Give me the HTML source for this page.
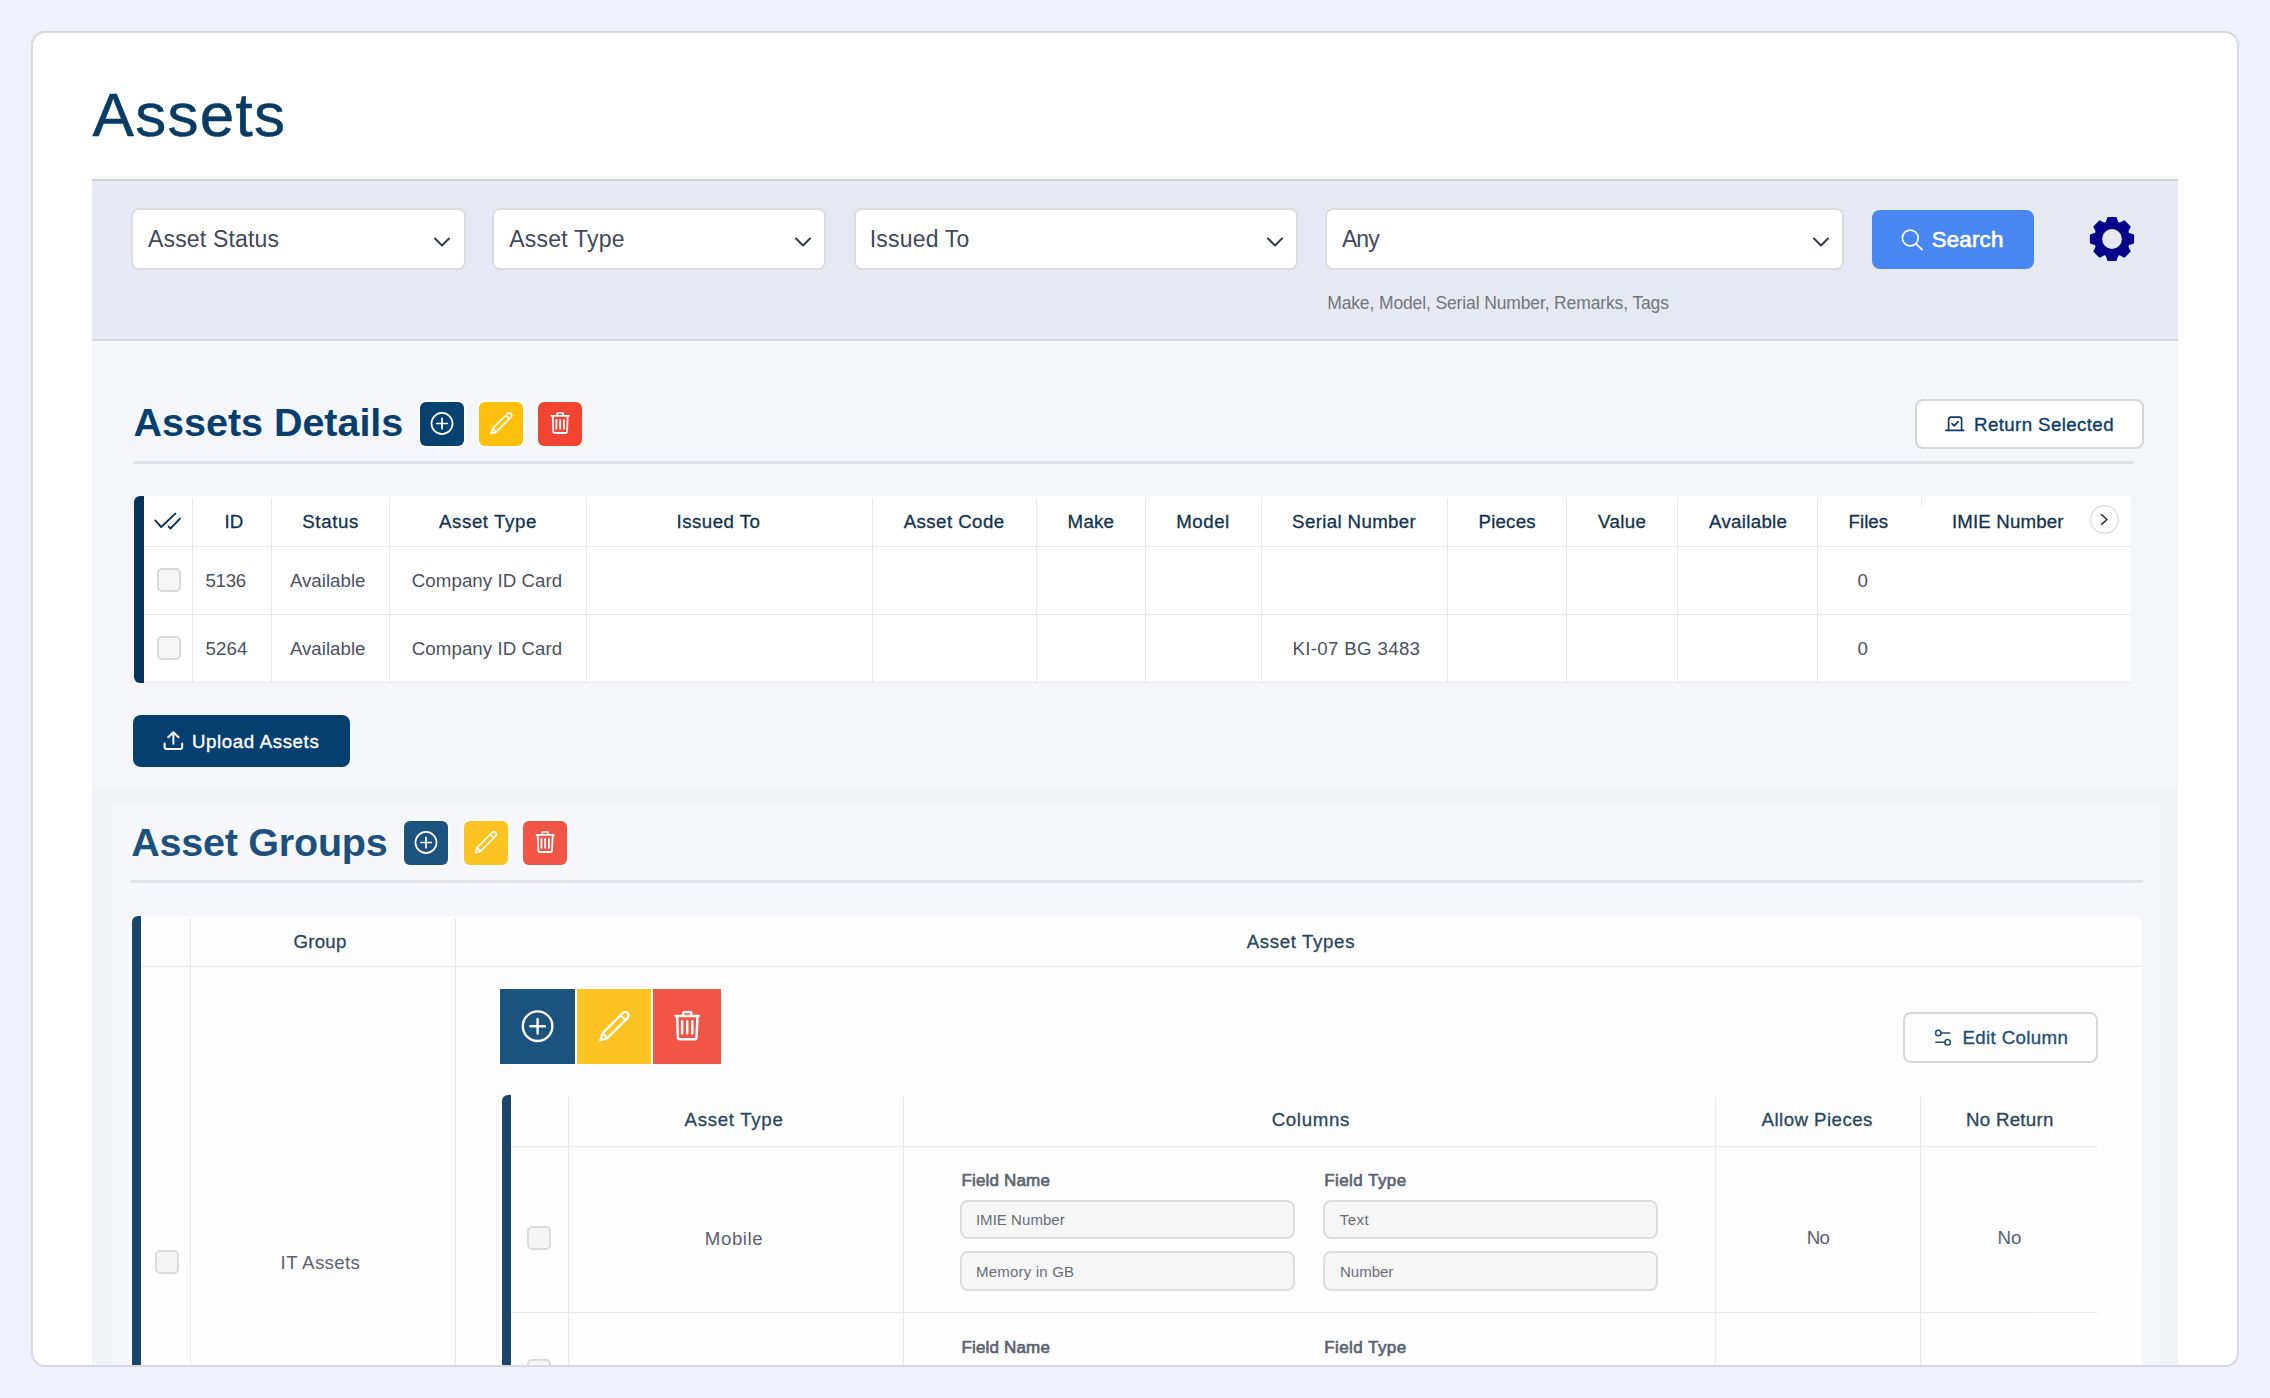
<!DOCTYPE html><html><head><meta charset="utf-8"><style>
html,body{margin:0;padding:0}
body{width:2270px;height:1398px;overflow:hidden;background:#eff1fb;position:relative;font-family:"Liberation Sans",sans-serif}
.b{position:absolute;box-sizing:border-box}
.t{position:absolute;white-space:nowrap}
svg{position:absolute;overflow:visible}
</style></head><body>
<div class="b" style="left:31px;top:31px;width:2208px;height:1336px;background:#fff;border:2px solid #d7d8e4;border-radius:14px"></div>
<div class="b" style="left:0;top:0;width:2270px;height:1398px;clip-path:inset(33px 33px 33px 33px round 12px)">
<div class="t" style="left:92.60px;top:83.75px;font-size:62px;line-height:62px;font-weight:400;color:#073b64;letter-spacing:1.280px;-webkit-text-stroke:0.5px #073b64">Assets</div>
<div class="b" style="left:92px;top:176px;width:2086px;height:3px;background:#f7f8fa"></div>
<div class="b" style="left:92px;top:179px;width:2086px;height:162px;background:#e6e9f1;border-top:2px solid #d2d3d7;border-bottom:2px solid #d7d8dc"></div>
<div class="b" style="left:131px;top:208px;width:335px;height:62px;background:#fff;border:2px solid #dcdcdc;border-radius:8px"></div>
<div class="t" style="left:148.00px;top:227.54px;font-size:23px;line-height:23px;font-weight:400;color:#414958;letter-spacing:0.178px;">Asset Status</div>
<svg style="left:434px;top:234px" width="16" height="16" viewBox="0 0 16 16"><path d="M1 4.5 L8 11.5 L15 4.5" fill="none" stroke="#333b47" stroke-width="2" stroke-linecap="round" stroke-linejoin="round"/></svg>
<div class="b" style="left:492px;top:208px;width:334px;height:62px;background:#fff;border:2px solid #dcdcdc;border-radius:8px"></div>
<div class="t" style="left:509.30px;top:227.54px;font-size:23px;line-height:23px;font-weight:400;color:#414958;letter-spacing:0.201px;">Asset Type</div>
<svg style="left:795px;top:234px" width="16" height="16" viewBox="0 0 16 16"><path d="M1 4.5 L8 11.5 L15 4.5" fill="none" stroke="#333b47" stroke-width="2" stroke-linecap="round" stroke-linejoin="round"/></svg>
<div class="b" style="left:854px;top:208px;width:444px;height:62px;background:#fff;border:2px solid #dcdcdc;border-radius:8px"></div>
<div class="t" style="left:869.80px;top:227.54px;font-size:23px;line-height:23px;font-weight:400;color:#414958;letter-spacing:0.178px;">Issued To</div>
<svg style="left:1267px;top:234px" width="16" height="16" viewBox="0 0 16 16"><path d="M1 4.5 L8 11.5 L15 4.5" fill="none" stroke="#333b47" stroke-width="2" stroke-linecap="round" stroke-linejoin="round"/></svg>
<div class="b" style="left:1325px;top:208px;width:519px;height:62px;background:#fff;border:2px solid #dcdcdc;border-radius:8px"></div>
<div class="t" style="left:1342.00px;top:227.54px;font-size:23px;line-height:23px;font-weight:400;color:#414958;letter-spacing:-0.987px;">Any</div>
<svg style="left:1812.5px;top:234px" width="16" height="16" viewBox="0 0 16 16"><path d="M1 4.5 L8 11.5 L15 4.5" fill="none" stroke="#333b47" stroke-width="2" stroke-linecap="round" stroke-linejoin="round"/></svg>
<div class="t" style="left:1327.20px;top:295.19px;font-size:17.5px;line-height:17.5px;font-weight:400;color:#72757c;letter-spacing:-0.128px;">Make, Model, Serial Number, Remarks, Tags</div>
<div class="b" style="left:1872px;top:210px;width:162px;height:59px;background:#4886f1;border-radius:8px"></div>
<svg style="left:1890px;top:220px" width="40" height="40" viewBox="0 0 40 40"><circle cx="20.3" cy="18" r="7.9" fill="none" stroke="#fff" stroke-width="1.7"/><path d="M26.1 23.9 L32 29.6" stroke="#fff" stroke-width="1.8" stroke-linecap="round"/></svg>
<div class="t" style="left:1931.70px;top:228.73px;font-size:22.3px;line-height:22.3px;font-weight:400;color:#fff;letter-spacing:0.202px;-webkit-text-stroke:0.7px #fff">Search</div>
<svg style="left:2111.8px;top:239.4px" width="1" height="1"><g fill="#05058c" stroke="#05058c" stroke-width="2" stroke-linejoin="round"><circle r="17"/><path d="M-5.6 -15.5L-3.7 -21.1H3.7L5.6 -15.5Z" transform="rotate(0)"/><path d="M-5.6 -15.5L-3.7 -21.1H3.7L5.6 -15.5Z" transform="rotate(45)"/><path d="M-5.6 -15.5L-3.7 -21.1H3.7L5.6 -15.5Z" transform="rotate(90)"/><path d="M-5.6 -15.5L-3.7 -21.1H3.7L5.6 -15.5Z" transform="rotate(135)"/><path d="M-5.6 -15.5L-3.7 -21.1H3.7L5.6 -15.5Z" transform="rotate(180)"/><path d="M-5.6 -15.5L-3.7 -21.1H3.7L5.6 -15.5Z" transform="rotate(225)"/><path d="M-5.6 -15.5L-3.7 -21.1H3.7L5.6 -15.5Z" transform="rotate(270)"/><path d="M-5.6 -15.5L-3.7 -21.1H3.7L5.6 -15.5Z" transform="rotate(315)"/></g><circle r="9.9" fill="#e6e9f1"/></svg>
<div class="b" style="left:92px;top:341px;width:2086px;height:445px;background:#f5f6fa"></div>
<div class="b" style="left:92px;top:786px;width:2086px;height:581px;background:#f2f3f7"></div>
<div class="t" style="left:133.60px;top:403.08px;font-size:39.5px;line-height:39.5px;font-weight:700;color:#063f6f;letter-spacing:-0.029px;">Assets Details</div>
<div class="b" style="left:420px;top:402px;width:44px;height:44px;background:#05426f;border-radius:6px;box-shadow:0 0 0 2px rgba(255,255,255,.85)"></div>
<div class="b" style="left:479px;top:402px;width:44px;height:44px;background:#fec00d;border-radius:6px;box-shadow:0 0 0 2px rgba(255,255,255,.85)"></div>
<div class="b" style="left:538px;top:402px;width:44px;height:44px;background:#f14433;border-radius:6px;box-shadow:0 0 0 2px rgba(255,255,255,.85)"></div>
<svg style="left:0;top:0" width="2270" height="1398"><g transform="translate(442 424) scale(1.0) translate(-22 -22)"><circle cx="22" cy="21.5" r="10.55" fill="none" stroke="#fff" stroke-width="1.7"/><path d="M22 16.3V26.7M16.8 21.5H27.2" stroke="#fff" stroke-width="1.7" stroke-linecap="round"/></g></svg>
<svg style="left:0;top:0" width="2270" height="1398"><g transform="translate(501 424) scale(1.0) translate(-22 -22)"><g transform="translate(22 21.7) rotate(-45)" fill="none" stroke="#fff" stroke-width="1.7" stroke-linejoin="round"><path d="M-14.2 0L-9.4 -2.5H11.6A2.5 2.5 0 0 1 11.6 2.5H-9.4Z"/><path d="M9.3 -2.5V2.5M-9.4 -2.5V2.5"/></g></g></svg>
<svg style="left:0;top:0" width="2270" height="1398"><g transform="translate(560 424) scale(1.0) translate(-22 -22)"><g fill="none" stroke="#fff" stroke-linecap="round" stroke-linejoin="round"><path d="M19.2 13.4V11H25.1V13.4" stroke-width="1.6"/><path d="M13.5 13.9H30.8" stroke-width="1.7"/><path d="M14.7 14.2L15.3 29.6Q15.4 31 16.8 31H27.5Q28.9 31 29 29.6L29.7 14.2" stroke-width="1.8"/><path d="M18.4 17.8V26.8M22.15 17.8V26.8M25.9 17.8V26.8" stroke-width="1.8"/></g></g></svg>
<div class="b" style="left:133px;top:461px;width:2001px;height:3px;background:#e1e3e8"></div>
<div class="b" style="left:1915px;top:399px;width:229px;height:50px;background:#fff;border:2px solid #d4d4d4;border-radius:8px"></div>
<svg style="left:1938px;top:408px" width="34" height="30" viewBox="0 0 34 30"><g fill="none" stroke="#0c3d68" stroke-width="1.7" stroke-linecap="round" stroke-linejoin="round"><path d="M10.6 22.3V11.7Q10.6 9.2 13.1 9.2H21.1Q23.6 9.2 23.6 11.7V22.3"/><path d="M14 15.7L16.1 17.8L20.2 13.7"/><path d="M7.9 22.3H25.7"/></g></svg>
<div class="t" style="left:1974.00px;top:415.78px;font-size:18.7px;line-height:18.7px;font-weight:400;color:#0c3d68;letter-spacing:0.394px;-webkit-text-stroke:0.35px #0c3d68">Return Selected</div>
<div class="b" style="left:134px;top:496px;width:1997px;height:187px;background:#fff;border-radius:6px 4px 4px 6px"></div>
<div class="b" style="left:134px;top:496px;width:10px;height:187px;background:#03345a;border-radius:6px 0 0 6px"></div>
<div class="b" style="left:144px;top:546px;width:1987px;height:1px;background:#e8e8ea"></div>
<div class="b" style="left:144px;top:614px;width:1987px;height:1px;background:#e8e8ea"></div>
<div class="b" style="left:144px;top:682px;width:1987px;height:1px;background:#e9eaec"></div>
<div class="b" style="left:192px;top:498px;width:1px;height:185px;background:#e8e8ea"></div>
<div class="b" style="left:271px;top:498px;width:1px;height:185px;background:#e8e8ea"></div>
<div class="b" style="left:389px;top:498px;width:1px;height:185px;background:#e8e8ea"></div>
<div class="b" style="left:586px;top:498px;width:1px;height:185px;background:#e8e8ea"></div>
<div class="b" style="left:872px;top:498px;width:1px;height:185px;background:#e8e8ea"></div>
<div class="b" style="left:1036px;top:498px;width:1px;height:185px;background:#e8e8ea"></div>
<div class="b" style="left:1145px;top:498px;width:1px;height:185px;background:#e8e8ea"></div>
<div class="b" style="left:1261px;top:498px;width:1px;height:185px;background:#e8e8ea"></div>
<div class="b" style="left:1447px;top:498px;width:1px;height:185px;background:#e8e8ea"></div>
<div class="b" style="left:1566px;top:498px;width:1px;height:185px;background:#e8e8ea"></div>
<div class="b" style="left:1677px;top:498px;width:1px;height:185px;background:#e8e8ea"></div>
<div class="b" style="left:1817px;top:498px;width:1px;height:185px;background:#e8e8ea"></div>
<div class="b" style="left:1921px;top:498px;width:1px;height:9px;background:#e8e8ea"></div>
<div class="t" style="left:224.50px;top:513.18px;font-size:18.7px;line-height:18.7px;font-weight:400;color:#12334f;letter-spacing:0.000px;-webkit-text-stroke:0.3px #12334f">ID</div>
<div class="t" style="left:302.30px;top:513.18px;font-size:18.7px;line-height:18.7px;font-weight:400;color:#12334f;letter-spacing:0.597px;-webkit-text-stroke:0.3px #12334f">Status</div>
<div class="t" style="left:439.00px;top:513.18px;font-size:18.7px;line-height:18.7px;font-weight:400;color:#12334f;letter-spacing:0.579px;-webkit-text-stroke:0.3px #12334f">Asset Type</div>
<div class="t" style="left:676.50px;top:513.18px;font-size:18.7px;line-height:18.7px;font-weight:400;color:#12334f;letter-spacing:0.467px;-webkit-text-stroke:0.3px #12334f">Issued To</div>
<div class="t" style="left:903.70px;top:513.18px;font-size:18.7px;line-height:18.7px;font-weight:400;color:#12334f;letter-spacing:0.425px;-webkit-text-stroke:0.3px #12334f">Asset Code</div>
<div class="t" style="left:1067.60px;top:513.18px;font-size:18.7px;line-height:18.7px;font-weight:400;color:#12334f;letter-spacing:0.226px;-webkit-text-stroke:0.3px #12334f">Make</div>
<div class="t" style="left:1176.30px;top:513.18px;font-size:18.7px;line-height:18.7px;font-weight:400;color:#12334f;letter-spacing:0.511px;-webkit-text-stroke:0.3px #12334f">Model</div>
<div class="t" style="left:1292.10px;top:513.18px;font-size:18.7px;line-height:18.7px;font-weight:400;color:#12334f;letter-spacing:0.359px;-webkit-text-stroke:0.3px #12334f">Serial Number</div>
<div class="t" style="left:1478.50px;top:513.18px;font-size:18.7px;line-height:18.7px;font-weight:400;color:#12334f;letter-spacing:0.200px;-webkit-text-stroke:0.3px #12334f">Pieces</div>
<div class="t" style="left:1598.00px;top:513.18px;font-size:18.7px;line-height:18.7px;font-weight:400;color:#12334f;letter-spacing:0.383px;-webkit-text-stroke:0.3px #12334f">Value</div>
<div class="t" style="left:1709.00px;top:513.18px;font-size:18.7px;line-height:18.7px;font-weight:400;color:#12334f;letter-spacing:0.306px;-webkit-text-stroke:0.3px #12334f">Available</div>
<div class="t" style="left:1848.60px;top:513.18px;font-size:18.7px;line-height:18.7px;font-weight:400;color:#12334f;letter-spacing:-0.014px;-webkit-text-stroke:0.3px #12334f">Files</div>
<div class="t" style="left:1952.00px;top:513.18px;font-size:18.7px;line-height:18.7px;font-weight:400;color:#12334f;letter-spacing:0.136px;-webkit-text-stroke:0.3px #12334f">IMIE Number</div>
<svg style="left:145px;top:505px" width="40" height="30" viewBox="0 0 40 30"><g fill="none" stroke="#0d3350" stroke-width="1.9" stroke-linecap="round" stroke-linejoin="round"><path d="M10.2 15.4L16.2 22L30.3 8.6"/><path d="M23.6 21.6L25.5 23.5L35 13.6"/></g></svg>
<svg style="left:2085px;top:500px" width="40" height="40" viewBox="0 0 40 40"><circle cx="19.5" cy="19.5" r="13.8" fill="#fff" stroke="#dcdcdf" stroke-width="1.3"/><path d="M16.6 14.6L22 19.5L16.6 24.3" fill="none" stroke="#33383f" stroke-width="1.6" stroke-linecap="round" stroke-linejoin="round"/></svg>
<div class="b" style="left:157px;top:568px;width:24px;height:24px;background:#f6f6f6;border:2px solid #d9d9d9;border-radius:5px"></div>
<div class="t" style="left:205.40px;top:572.18px;font-size:18.7px;line-height:18.7px;font-weight:400;color:#4b525e;letter-spacing:-0.236px;">5136</div>
<div class="t" style="left:289.90px;top:572.18px;font-size:18.7px;line-height:18.7px;font-weight:400;color:#4b525e;letter-spacing:0.007px;">Available</div>
<div class="t" style="left:411.80px;top:572.18px;font-size:18.7px;line-height:18.7px;font-weight:400;color:#4b525e;letter-spacing:0.065px;">Company ID Card</div>
<div class="t" style="left:1857.60px;top:572.18px;font-size:18.7px;line-height:18.7px;font-weight:400;color:#4b525e;letter-spacing:0.000px;">0</div>
<div class="b" style="left:157px;top:636px;width:24px;height:24px;background:#f6f6f6;border:2px solid #d9d9d9;border-radius:5px"></div>
<div class="t" style="left:205.40px;top:639.88px;font-size:18.7px;line-height:18.7px;font-weight:400;color:#4b525e;letter-spacing:0.164px;">5264</div>
<div class="t" style="left:289.90px;top:639.88px;font-size:18.7px;line-height:18.7px;font-weight:400;color:#4b525e;letter-spacing:0.007px;">Available</div>
<div class="t" style="left:411.80px;top:639.88px;font-size:18.7px;line-height:18.7px;font-weight:400;color:#4b525e;letter-spacing:0.065px;">Company ID Card</div>
<div class="t" style="left:1857.60px;top:639.88px;font-size:18.7px;line-height:18.7px;font-weight:400;color:#4b525e;letter-spacing:0.000px;">0</div>
<div class="t" style="left:1292.40px;top:639.88px;font-size:18.7px;line-height:18.7px;font-weight:400;color:#4b525e;letter-spacing:0.333px;">KI-07 BG 3483</div>
<div class="b" style="left:133px;top:715px;width:217px;height:52px;background:#043f70;border-radius:8px"></div>
<svg style="left:155px;top:722px" width="40" height="36" viewBox="0 0 40 36"><g fill="none" stroke="#fff" stroke-width="2" stroke-linecap="round" stroke-linejoin="round"><path d="M9.6 21.4V25Q9.6 27 11.6 27H25.2Q27.2 27 27.2 25V21.4"/><path d="M18.4 10.5V21.8"/><path d="M13.2 15.3L18.4 10.2L23.6 15.3"/></g></svg>
<div class="t" style="left:192.00px;top:732.88px;font-size:18.7px;line-height:18.7px;font-weight:400;color:#fff;letter-spacing:0.609px;-webkit-text-stroke:0.35px #fff">Upload Assets</div>
<div class="b" style="left:0;top:0;width:2270px;height:1398px;opacity:.9">
<div class="b" style="left:112px;top:805px;width:2048px;height:562px;background:#f7f8fb"></div>
<div class="t" style="left:131.20px;top:823.08px;font-size:39.5px;line-height:39.5px;font-weight:700;color:#063f6f;letter-spacing:-0.229px;">Asset Groups</div>
<div class="b" style="left:404px;top:821px;width:44px;height:44px;background:#05426f;border-radius:6px;box-shadow:0 0 0 2px rgba(255,255,255,.85)"></div>
<div class="b" style="left:463.5px;top:821px;width:44.0px;height:44px;background:#fec00d;border-radius:6px;box-shadow:0 0 0 2px rgba(255,255,255,.85)"></div>
<div class="b" style="left:523px;top:821px;width:44px;height:44px;background:#f14433;border-radius:6px;box-shadow:0 0 0 2px rgba(255,255,255,.85)"></div>
<svg style="left:0;top:0" width="2270" height="1398"><g transform="translate(426 843) scale(1.0) translate(-22 -22)"><circle cx="22" cy="21.5" r="10.55" fill="none" stroke="#fff" stroke-width="1.7"/><path d="M22 16.3V26.7M16.8 21.5H27.2" stroke="#fff" stroke-width="1.7" stroke-linecap="round"/></g></svg>
<svg style="left:0;top:0" width="2270" height="1398"><g transform="translate(485.5 843) scale(1.0) translate(-22 -22)"><g transform="translate(22 21.7) rotate(-45)" fill="none" stroke="#fff" stroke-width="1.7" stroke-linejoin="round"><path d="M-14.2 0L-9.4 -2.5H11.6A2.5 2.5 0 0 1 11.6 2.5H-9.4Z"/><path d="M9.3 -2.5V2.5M-9.4 -2.5V2.5"/></g></g></svg>
<svg style="left:0;top:0" width="2270" height="1398"><g transform="translate(545 843) scale(1.0) translate(-22 -22)"><g fill="none" stroke="#fff" stroke-linecap="round" stroke-linejoin="round"><path d="M19.2 13.4V11H25.1V13.4" stroke-width="1.6"/><path d="M13.5 13.9H30.8" stroke-width="1.7"/><path d="M14.7 14.2L15.3 29.6Q15.4 31 16.8 31H27.5Q28.9 31 29 29.6L29.7 14.2" stroke-width="1.8"/><path d="M18.4 17.8V26.8M22.15 17.8V26.8M25.9 17.8V26.8" stroke-width="1.8"/></g></g></svg>
<div class="b" style="left:130px;top:880px;width:2013px;height:3px;background:#e1e3e8"></div>
<div class="b" style="left:132px;top:916px;width:2010px;height:484px;background:#fff;border-radius:6px"></div>
<div class="b" style="left:132px;top:916px;width:9px;height:484px;background:#03345a;border-radius:6px 0 0 0"></div>
<div class="b" style="left:141px;top:966px;width:2001px;height:1px;background:#e8e8ea"></div>
<div class="b" style="left:190px;top:918px;width:1px;height:482px;background:#e8e8ea"></div>
<div class="b" style="left:455px;top:918px;width:1px;height:482px;background:#e8e8ea"></div>
<div class="t" style="left:293.50px;top:932.58px;font-size:18.7px;line-height:18.7px;font-weight:400;color:#12334f;letter-spacing:0.228px;-webkit-text-stroke:0.3px #12334f">Group</div>
<div class="t" style="left:1246.70px;top:932.58px;font-size:18.7px;line-height:18.7px;font-weight:400;color:#12334f;letter-spacing:0.636px;-webkit-text-stroke:0.3px #12334f">Asset Types</div>
<div class="b" style="left:155px;top:1250px;width:24px;height:24px;background:#f6f6f6;border:2px solid #d9d9d9;border-radius:5px"></div>
<div class="t" style="left:280.60px;top:1254.18px;font-size:18.7px;line-height:18.7px;font-weight:400;color:#4b525e;letter-spacing:0.353px;">IT Assets</div>
<div class="b" style="left:500px;top:989px;width:75px;height:75px;background:#05426f"></div>
<div class="b" style="left:577px;top:989px;width:74px;height:75px;background:#fec00d"></div>
<div class="b" style="left:653px;top:989px;width:68px;height:75px;background:#f14433"></div>
<svg style="left:0;top:0" width="2270" height="1398"><g transform="translate(537.6 1026.9) scale(1.4) translate(-22 -22)"><circle cx="22" cy="21.5" r="10.55" fill="none" stroke="#fff" stroke-width="1.7"/><path d="M22 16.3V26.7M16.8 21.5H27.2" stroke="#fff" stroke-width="1.7" stroke-linecap="round"/></g></svg>
<svg style="left:0;top:0" width="2270" height="1398"><g transform="translate(614 1027) scale(1.36) translate(-22 -22)"><g transform="translate(22 21.7) rotate(-45)" fill="none" stroke="#fff" stroke-width="1.7" stroke-linejoin="round"><path d="M-14.2 0L-9.4 -2.5H11.6A2.5 2.5 0 0 1 11.6 2.5H-9.4Z"/><path d="M9.3 -2.5V2.5M-9.4 -2.5V2.5"/></g></g></svg>
<svg style="left:0;top:0" width="2270" height="1398"><g transform="translate(687 1027) scale(1.36) translate(-22 -22)"><g fill="none" stroke="#fff" stroke-linecap="round" stroke-linejoin="round"><path d="M19.2 13.4V11H25.1V13.4" stroke-width="1.6"/><path d="M13.5 13.9H30.8" stroke-width="1.7"/><path d="M14.7 14.2L15.3 29.6Q15.4 31 16.8 31H27.5Q28.9 31 29 29.6L29.7 14.2" stroke-width="1.8"/><path d="M18.4 17.8V26.8M22.15 17.8V26.8M25.9 17.8V26.8" stroke-width="1.8"/></g></g></svg>
<div class="b" style="left:1903px;top:1012px;width:195px;height:51px;background:#fff;border:2px solid #d4d4d4;border-radius:8px"></div>
<svg style="left:1928px;top:1022px" width="30" height="30" viewBox="0 0 30 30"><g fill="none" stroke="#0c3d68" stroke-width="1.5" stroke-linecap="round"><circle cx="10.3" cy="10.9" r="2.75"/><path d="M13.1 10.9H21.7"/><circle cx="19.6" cy="20.3" r="2.75"/><path d="M7.9 20.3H16.8"/></g></svg>
<div class="t" style="left:1962.40px;top:1029.38px;font-size:18.7px;line-height:18.7px;font-weight:400;color:#0c3d68;letter-spacing:0.378px;-webkit-text-stroke:0.35px #0c3d68">Edit Column</div>
<div class="b" style="left:502px;top:1095px;width:1595px;height:305px;background:#fff;border-radius:6px"></div>
<div class="b" style="left:502px;top:1095px;width:9px;height:305px;background:#03345a;border-radius:6px 0 0 0"></div>
<div class="b" style="left:511px;top:1146px;width:1586px;height:1px;background:#e8e8ea"></div>
<div class="b" style="left:511px;top:1312px;width:1586px;height:1px;background:#e8e8ea"></div>
<div class="b" style="left:568px;top:1097px;width:1px;height:303px;background:#e8e8ea"></div>
<div class="b" style="left:903px;top:1097px;width:1px;height:303px;background:#e8e8ea"></div>
<div class="b" style="left:1715px;top:1097px;width:1px;height:303px;background:#e8e8ea"></div>
<div class="b" style="left:1920px;top:1097px;width:1px;height:303px;background:#e8e8ea"></div>
<div class="t" style="left:684.60px;top:1111.18px;font-size:18.7px;line-height:18.7px;font-weight:400;color:#12334f;letter-spacing:0.679px;-webkit-text-stroke:0.3px #12334f">Asset Type</div>
<div class="t" style="left:1271.70px;top:1111.18px;font-size:18.7px;line-height:18.7px;font-weight:400;color:#12334f;letter-spacing:0.638px;-webkit-text-stroke:0.3px #12334f">Columns</div>
<div class="t" style="left:1761.60px;top:1111.18px;font-size:18.7px;line-height:18.7px;font-weight:400;color:#12334f;letter-spacing:0.443px;-webkit-text-stroke:0.3px #12334f">Allow Pieces</div>
<div class="t" style="left:1966.00px;top:1111.18px;font-size:18.7px;line-height:18.7px;font-weight:400;color:#12334f;letter-spacing:0.266px;-webkit-text-stroke:0.3px #12334f">No Return</div>
<div class="b" style="left:527px;top:1226px;width:24px;height:24px;background:#f6f6f6;border:2px solid #d9d9d9;border-radius:5px"></div>
<div class="t" style="left:704.80px;top:1229.68px;font-size:18.7px;line-height:18.7px;font-weight:400;color:#4b525e;letter-spacing:0.566px;">Mobile</div>
<div class="t" style="left:1806.70px;top:1229.38px;font-size:18.7px;line-height:18.7px;font-weight:400;color:#4b525e;letter-spacing:-0.636px;">No</div>
<div class="t" style="left:1997.60px;top:1229.38px;font-size:18.7px;line-height:18.7px;font-weight:400;color:#4b525e;letter-spacing:-0.136px;">No</div>
<div class="t" style="left:961.40px;top:1171.92px;font-size:17px;line-height:17px;font-weight:400;color:#4b5362;letter-spacing:0.172px;-webkit-text-stroke:0.65px #4b5362">Field Name</div>
<div class="t" style="left:1324.20px;top:1171.92px;font-size:17px;line-height:17px;font-weight:400;color:#4b5362;letter-spacing:0.432px;-webkit-text-stroke:0.65px #4b5362">Field Type</div>
<div class="t" style="left:961.40px;top:1338.82px;font-size:17px;line-height:17px;font-weight:400;color:#4b5362;letter-spacing:0.172px;-webkit-text-stroke:0.65px #4b5362">Field Name</div>
<div class="t" style="left:1324.20px;top:1338.82px;font-size:17px;line-height:17px;font-weight:400;color:#4b5362;letter-spacing:0.432px;-webkit-text-stroke:0.65px #4b5362">Field Type</div>
<div class="b" style="left:959.5px;top:1200px;width:335.5px;height:39px;background:#f7f7f7;border:2px solid #dadada;border-radius:8px"></div>
<div class="b" style="left:1322.5px;top:1200px;width:335.5px;height:39px;background:#f7f7f7;border:2px solid #dadada;border-radius:8px"></div>
<div class="b" style="left:959.5px;top:1251px;width:335.5px;height:40px;background:#f7f7f7;border:2px solid #dadada;border-radius:8px"></div>
<div class="b" style="left:1322.5px;top:1251px;width:335.5px;height:40px;background:#f7f7f7;border:2px solid #dadada;border-radius:8px"></div>
<div class="t" style="left:975.90px;top:1212.31px;font-size:15px;line-height:15px;font-weight:400;color:#5a606b;letter-spacing:0.045px;">IMIE Number</div>
<div class="t" style="left:976.00px;top:1264.31px;font-size:15px;line-height:15px;font-weight:400;color:#5a606b;letter-spacing:0.195px;">Memory in GB</div>
<div class="t" style="left:1339.70px;top:1212.31px;font-size:15px;line-height:15px;font-weight:400;color:#5a606b;letter-spacing:0.525px;">Text</div>
<div class="t" style="left:1340.00px;top:1264.31px;font-size:15px;line-height:15px;font-weight:400;color:#5a606b;letter-spacing:0.000px;">Number</div>
<div class="b" style="left:527px;top:1359px;width:24px;height:24px;background:#f6f6f6;border:2px solid #d9d9d9;border-radius:5px"></div>
</div>
</div>
</body></html>
